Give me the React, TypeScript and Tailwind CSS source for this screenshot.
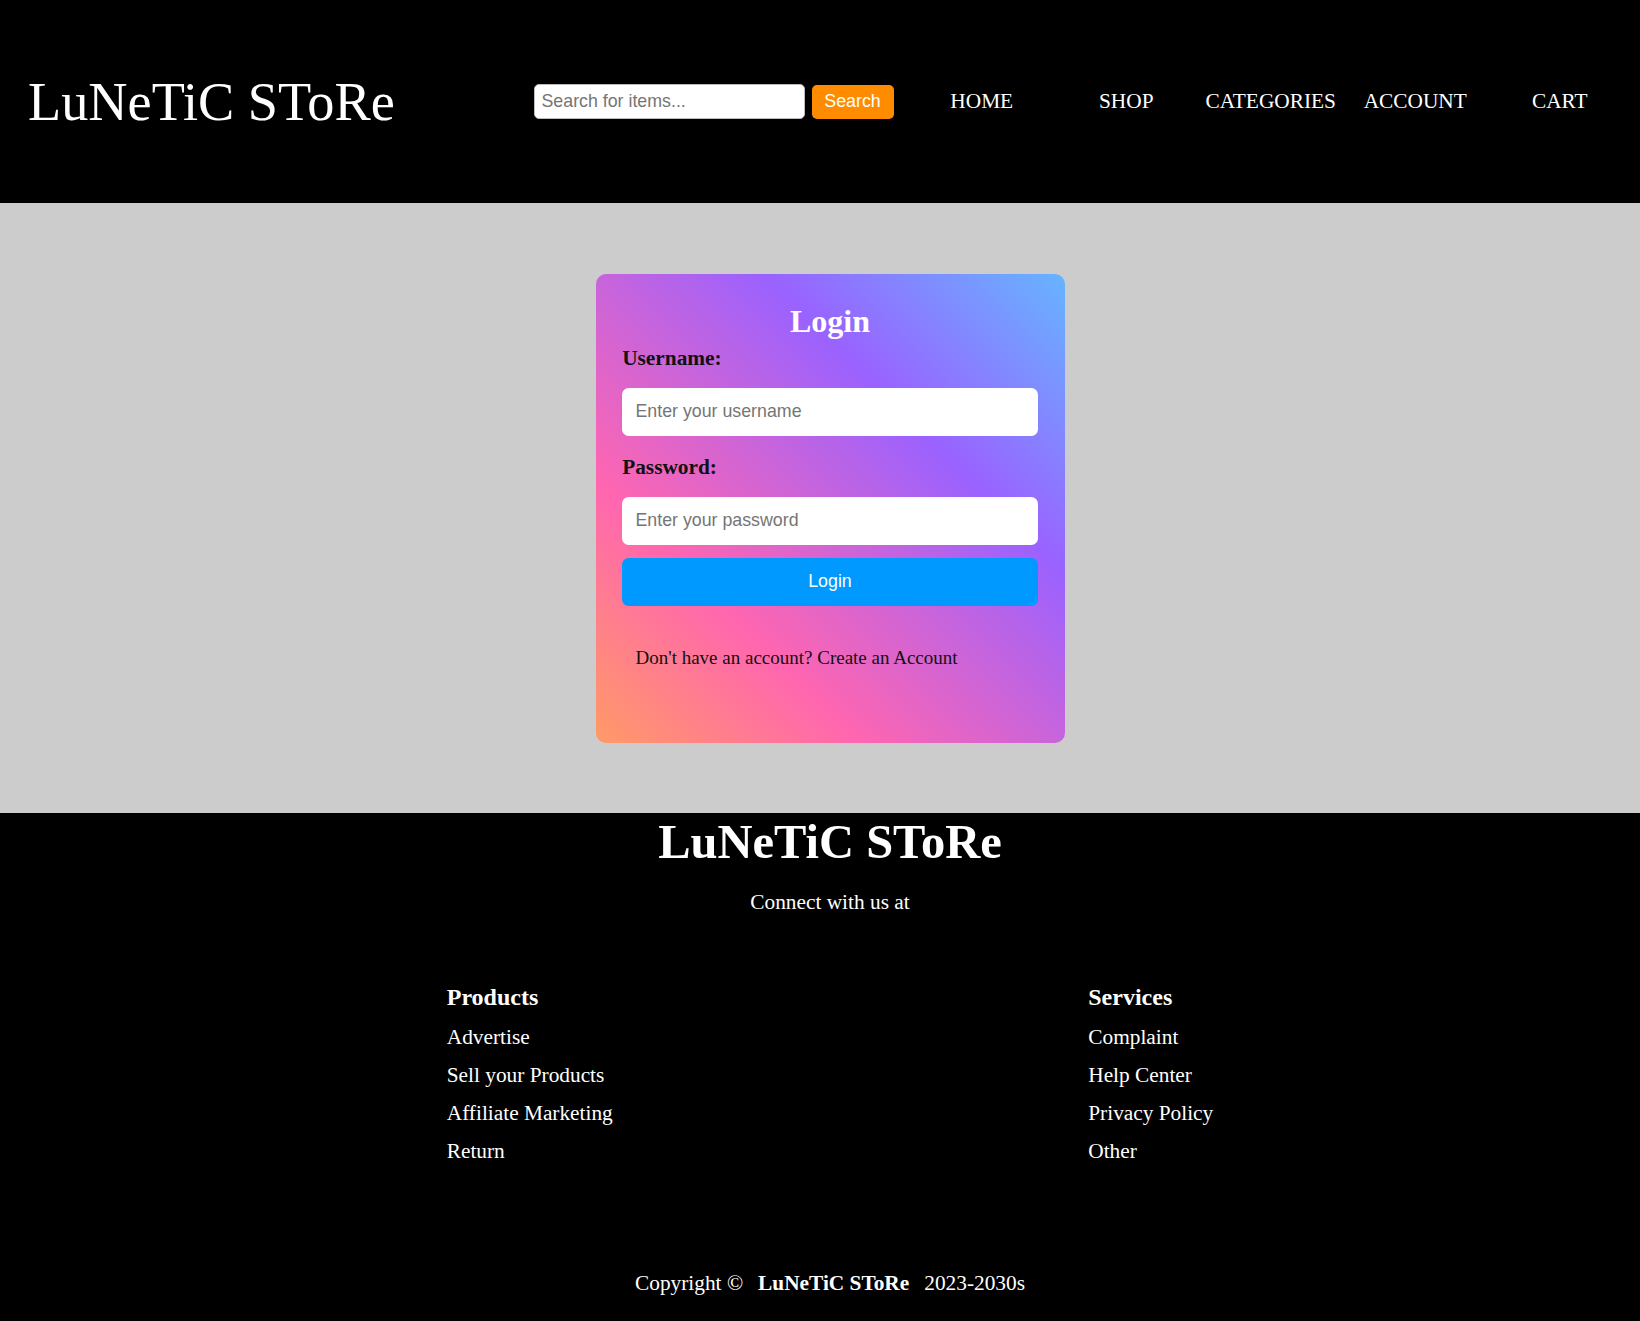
import React from "react"

const navItems = ["HOME", "SHOP", "CATEGORIES", "ACCOUNT", "CART"]

const productLinks = ["Advertise", "Sell your Products", "Affiliate Marketing", "Return"]
const serviceLinks = ["Complaint", "Help Center", "Privacy Policy", "Other"]

const Header = () => {
  return (
    <header className="h-[203px] bg-black text-white flex items-center">
      <div className="pl-[28px] text-[54.3px] leading-[62px] shrink-0">LuNeTiC SToRe</div>

      <div className="ml-auto pr-[8px] flex items-center">
        <form className="flex items-center" onSubmit={(e) => e.preventDefault()}>
          <input
            type="text"
            placeholder="Search for items..."
            className="w-[271px] h-[35px] rounded-[5px] bg-white border border-[#bbb] px-[7px] text-[17.8px] text-black placeholder:text-[#757575] font-['Liberation_Sans',Arial,sans-serif] outline-none"
          />
          <button
            type="submit"
            className="ml-[7px] w-[82px] h-[34px] rounded-[5px] bg-[#ff8c00] text-white text-[17.8px] font-['Liberation_Sans',Arial,sans-serif]"
          >
            Search
          </button>
        </form>

        <ul className="ml-[16px] flex">
          {navItems.map((item) => (
            <li key={item} className="w-[144.5px] text-center text-[21.33px] leading-[24.5px]">
              {item}
            </li>
          ))}
        </ul>
      </div>
    </header>
  )
}

const LoginCard = () => {
  return (
    <div className="w-[469px] h-[469px] rounded-[10px] px-[26.67px] pt-[29px] bg-[linear-gradient(45deg,#ff9a66_0%,#ff66b0_28%,#9a62ff_68%,#66b4ff_100%)]">
      <h2 className="text-center text-white font-bold text-[32px] leading-[37px]">Login</h2>

      <label className="block mt-[6px] text-[21.33px] leading-[24.5px] font-bold text-[#111]">
        Username:
      </label>
      <input
        type="text"
        placeholder="Enter your username"
        className="block mt-[17px] w-full h-[48px] rounded-[6.67px] bg-white px-[13.33px] text-[17.8px] placeholder:text-[#757575] font-['Liberation_Sans',Arial,sans-serif] outline-none"
      />

      <label className="block mt-[19.5px] text-[21.33px] leading-[24.5px] font-bold text-[#111]">
        Password:
      </label>
      <input
        type="password"
        placeholder="Enter your password"
        className="block mt-[17px] w-full h-[48px] rounded-[6.67px] bg-white px-[13.33px] text-[17.8px] placeholder:text-[#757575] font-['Liberation_Sans',Arial,sans-serif] outline-none"
      />

      <button className="block mt-[13px] w-full h-[48px] rounded-[6.67px] bg-[#0099ff] text-white text-[17.8px] font-['Liberation_Sans',Arial,sans-serif]">
        Login
      </button>

      <p className="mt-[41px] pl-[13.33px] text-[19px] leading-[22px] text-[#111]">
        Don't have an account? Create an Account
      </p>
    </div>
  )
}

const FooterColumn = ({ title, links }: { title: string; links: Array<string> }) => {
  return (
    <div className="flex flex-col items-start gap-[13.5px]">
      <h3 className="text-[24px] leading-[27.6px] font-bold">{title}</h3>
      {links.map((link) => (
        <a key={link} href="#" className="text-[21.33px] leading-[24.5px]">
          {link}
        </a>
      ))}
    </div>
  )
}

const Footer = () => {
  return (
    <footer className="h-[508px] bg-black text-white pl-5 pt-[1px] flex flex-col items-center">
      <h2 className="text-[48.5px] leading-[55px] font-bold">LuNeTiC SToRe</h2>
      <p className="mt-[21px] text-[21.33px] leading-[24.5px]">Connect with us at</p>

      <div className="mt-[69px] w-[1242px] flex justify-around">
        <FooterColumn title="Products" links={productLinks} />
        <FooterColumn title="Services" links={serviceLinks} />
      </div>

      <div className="mt-[107.5px] flex gap-[15px] text-[21.33px] leading-[24.5px]">
        <span>Copyright ©</span>
        <span className="font-bold">LuNeTiC SToRe</span>
        <span>2023-2030s</span>
      </div>
    </footer>
  )
}

const App = () => {
  return (
    <div className="font-['Liberation_Serif','Times_New_Roman',serif]">
      <Header />
      <main className="h-[610px] bg-[#cccccc] pl-5 pt-[71px] flex justify-center items-start">
        <LoginCard />
      </main>
      <Footer />
    </div>
  )
}

export default App
